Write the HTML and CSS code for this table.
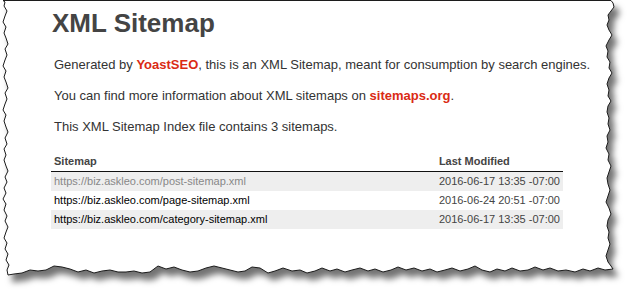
FILE: index.html
```html
<!DOCTYPE html>
<html>
<head>
<meta charset="utf-8">
<link rel="stylesheet" href="styles.css">
</head>
<body>
<svg class="paper" width="630" height="291" viewBox="0 0 630 291" aria-hidden="true">
  <defs>
    <filter id="sh" x="-5%" y="-5%" width="115%" height="120%">
      <feDropShadow dx="5" dy="7" stdDeviation="3" flood-color="#000" flood-opacity="0.55"/>
    </filter>
  </defs>
  <polygon filter="url(#sh)" fill="#fff" stroke="#1a1a1a" stroke-width="1" stroke-linejoin="round"
    points="3,0.5 611,0.5 613,3 614,7 611,11 608,15 609,20 607,25 609,30 612,35 609,40 606,46 608,51 607,57 610,62 609,68 612,73 609,78 607,84 609,90 608,96 611,101 608,106 607,112 609,118 608,124 610,130 607,136 608,142 606,148 609,154 608,160 611,166 609,172 607,178 608,184 610,190 608,196 606,202 609,208 611,214 608,220 607,226 609,232 608,238 610,244 608,250 606,256 608,262 611,266 613,269 605,270 598,268 590,271 583,269 575,272 566,270 558,271 550,268 543,270 535,267 528,270 520,271 512,268 505,271 497,269 490,272 482,270 475,266 468,269 460,271 452,268 445,270 437,272 430,269 422,271 414,268 406,270 398,267 391,270 383,272 375,269 368,271 360,268 352,270 345,272 337,269 330,271 322,268 315,271 307,273 300,270 292,271 283,268 275,271 268,273 260,268 252,267 245,271 238,272 230,270 222,268 214,266 206,268 198,271 190,272 182,270 174,267 166,269 158,266 150,272 142,273 134,271 126,272 118,272 110,270 102,271 94,273 86,270 78,272 70,269 62,267 54,266 46,270 38,271 30,270 22,273 14,274 8,275 7,270 9,265 6,260 8,254 5,249 7,243 4,238 6,232 8,227 5,221 7,216 4,210 6,204 3,199 6,193 4,188 7,182 5,177 8,171 6,166 4,160 6,155 4,149 7,144 5,138 8,132 6,127 4,121 6,115 3,110 5,104 7,99 5,93 8,88 6,82 4,77 6,71 3,66 5,60 7,55 5,49 8,44 6,38 4,33 6,27 3,22 5,16 7,11 4,6 5,2"/>
</svg>
<main class="content">
  <h1 class="title">XML Sitemap</h1>
  <p class="intro">Generated by <a class="red" href="#">YoastSEO</a>, this is an XML Sitemap, meant for consumption by search engines.</p>
  <p class="intro">You can find more information about XML sitemaps on <a class="red" href="#">sitemaps.org</a>.</p>
  <p class="intro last">This XML Sitemap Index file contains 3 sitemaps.</p>
  <table class="maps">
    <thead>
      <tr><th class="c1">Sitemap</th><th class="c2">Last Modified</th></tr>
    </thead>
    <tbody>
      <tr class="odd"><td class="c1"><a class="visited" href="#">https://biz.askleo.com/post-sitemap.xml</a></td><td class="c2">2016-06-17 13:35 -07:00</td></tr>
      <tr><td class="c1"><a href="#">https://biz.askleo.com/page-sitemap.xml</a></td><td class="c2">2016-06-24 20:51 -07:00</td></tr>
      <tr class="odd"><td class="c1"><a href="#">https://biz.askleo.com/category-sitemap.xml</a></td><td class="c2">2016-06-17 13:35 -07:00</td></tr>
    </tbody>
  </table>
</main>
</body>
</html>
```
FILE: styles.css
```css
html, body {
  margin: 0;
  padding: 0;
  background: #fff;
}
body {
  width: 630px;
  height: 291px;
  overflow: hidden;
  position: relative;
  font-family: "Liberation Sans", Arial, Helvetica, sans-serif;
  color: #333;
}
.paper {
  position: absolute;
  left: 0;
  top: 0;
}
.content {
  position: relative;
  display: flex;
  flex-direction: column;
  align-items: flex-start;
  padding: 8px 0 0 51px;
}
.title {
  margin: 0 0 18px 1px;
  font-size: 26px;
  line-height: 30px;
  font-weight: bold;
  color: #444;
}
.intro {
  margin: 0 0 14px 3px;
  font-size: 13px;
  line-height: 17px;
  color: #333;
}
.intro.last {
  margin-bottom: 19px;
}
.red {
  color: #da2a14;
  font-weight: bold;
  text-decoration: none;
}
.maps {
  border-collapse: collapse;
  width: 512px;
  font-size: 11px;
}
.maps th {
  text-align: left;
  font-size: 11px;
  font-weight: bold;
  color: #444;
  line-height: 14px;
  padding: 0 3px 3px 3px;
  border-bottom: 1px solid #111;
}
.maps td {
  line-height: 19px;
  padding: 0 3px;
  white-space: nowrap;
}
.maps .c2 {
  width: 118px;
}
.maps td.c2 {
  color: #444;
}
.maps tr.odd td {
  background: #eee;
}
.maps a {
  color: #000;
  text-decoration: none;
}
.maps a.visited {
  color: #888;
}
```
